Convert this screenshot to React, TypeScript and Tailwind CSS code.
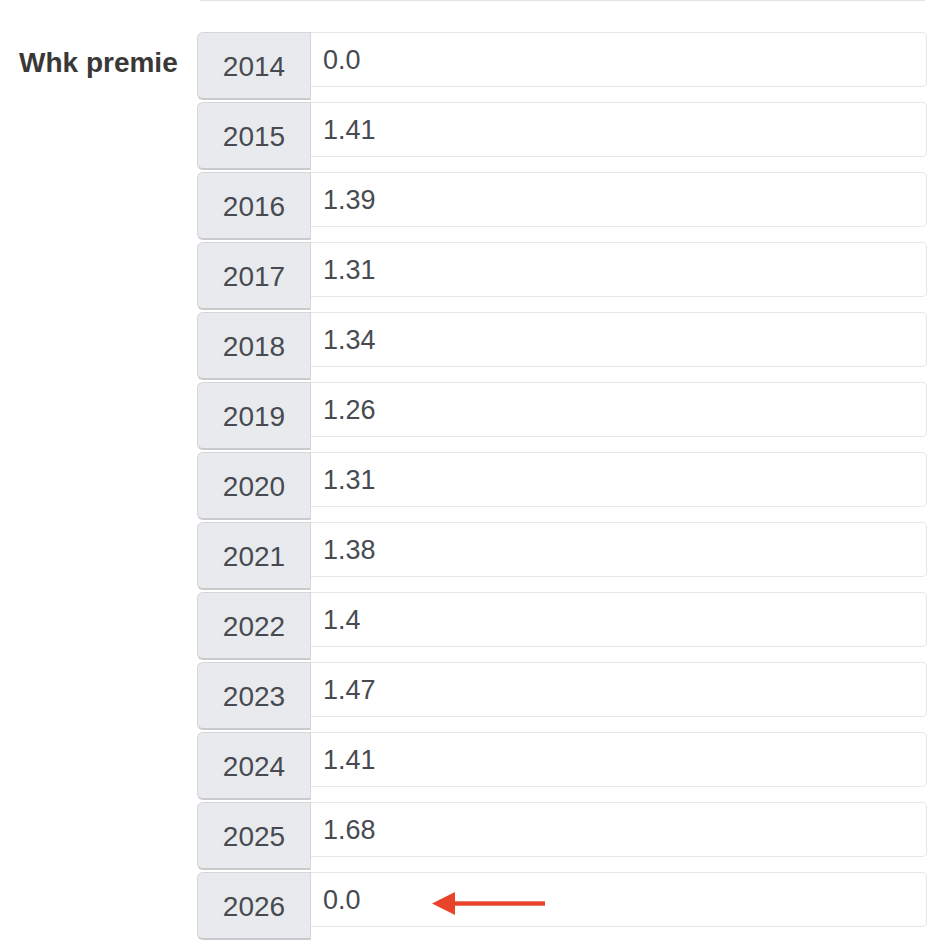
const rows: [string, string][] = [
  ['2014', '0.0'],
  ['2015', '1.41'],
  ['2016', '1.39'],
  ['2017', '1.31'],
  ['2018', '1.34'],
  ['2019', '1.26'],
  ['2020', '1.31'],
  ['2021', '1.38'],
  ['2022', '1.4'],
  ['2023', '1.47'],
  ['2024', '1.41'],
  ['2025', '1.68'],
  ['2026', '0.0'],
];

const YearInput: React.FC<{ year: string; value: string }> = ({ year, value }) => (
  <div className="flex h-[68px] items-start">
    <div className="flex h-[68px] w-[114px] shrink-0 items-center justify-center rounded-l-[6px] border border-b-2 border-[#d5d6d8] border-b-[#c9cacc] bg-[#e9eaed] pt-[3px] text-[28px] text-[#474b51]">
      {year}
    </div>
    <div className="flex h-[55px] flex-1 items-center rounded-r-[5px] border border-l-0 border-[#e6e6e6] bg-white pl-3 pt-[2px]">
      <input
        readOnly
        value={value}
        className="w-full bg-transparent text-[27px] text-[#474b51] outline-none"
      />
    </div>
  </div>
);

export default function App() {
  return (
    <div className="relative h-[944px] w-[946px] overflow-hidden bg-white font-['Liberation_Sans',Arial,sans-serif]">
      <div className="ml-[200px] mr-[21px] h-px bg-[#e4e4e4]" />
      <div className="mt-[31px] flex">
        <div className="w-[197px] shrink-0 pl-[19px] pt-[13px]">
          <label className="text-[28px] leading-[35px] font-bold text-[#393836]">Whk premie</label>
        </div>
        <div className="mr-[19px] flex flex-1 flex-col gap-[2px]">
          {rows.map(([year, value]) => (
            <YearInput key={year} year={year} value={value} />
          ))}
        </div>
      </div>
      <svg
        className="absolute left-[431px] top-[891px]"
        width="116"
        height="26"
        viewBox="0 0 116 26"
      >
        <path d="M1 12.5 L24 1 L24 24 Z" fill="#e8432b" />
        <rect x="22" y="10.3" width="92" height="4.4" fill="#e8432b" />
      </svg>
    </div>
  );
}
